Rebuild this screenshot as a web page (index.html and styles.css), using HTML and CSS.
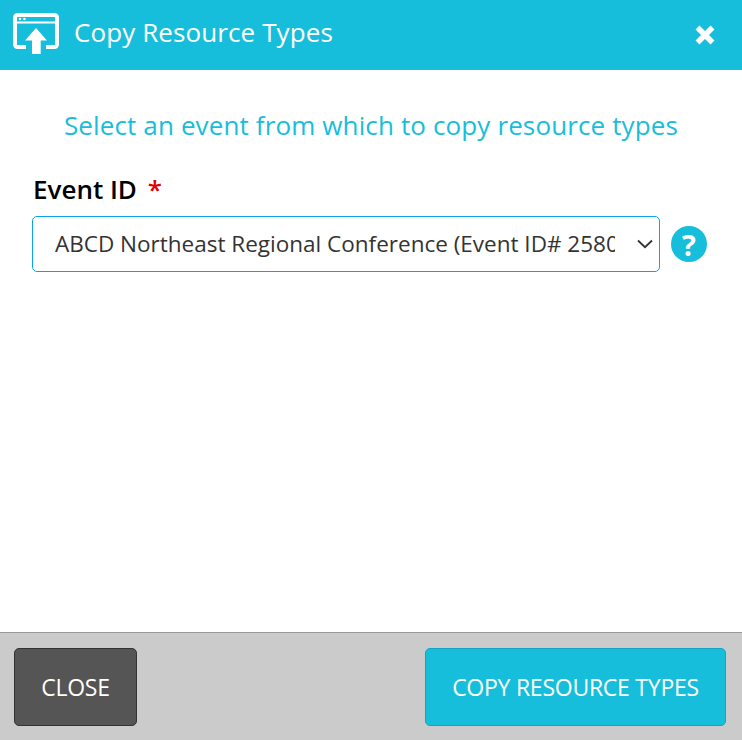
FILE: index.html
```html
<!DOCTYPE html>
<html lang="en">
<head>
  <meta charset="UTF-8">
  <title>Copy Resource Types</title>
  <link rel="stylesheet" href="styles.css">
</head>
<body>
  <div class="dialog">
    <header class="titlebar">
      <svg class="title-icon" width="46" height="41" viewBox="0 0 46 41">
        <path d="M13 34H4.5A2.5 2.5 0 0 1 2 31.5V4.5A2.5 2.5 0 0 1 4.5 2h37A2.5 2.5 0 0 1 44 4.5v27a2.5 2.5 0 0 1-2.5 2.5H33" fill="none" stroke="#fff" stroke-width="4"/>
        <path d="M2 9.5h42" stroke="#fff" stroke-width="2"/>
        <circle cx="7" cy="6" r="1.3" fill="#fff"/>
        <circle cx="11.5" cy="6" r="1.3" fill="#fff"/>
        <path d="M23 15L34 27.5H27.7V41H19V27.5H12Z" fill="#fff"/>
      </svg>
      <span class="title-text">Copy Resource Types</span>
      <svg class="title-close" width="20" height="20" viewBox="0 0 20 20">
        <path d="M2.5 2.5L17.5 17.5M17.5 2.5L2.5 17.5" stroke="#fff" stroke-width="5.6"/>
      </svg>
    </header>

    <main class="content">
      <h2 class="prompt">Select an event from which to copy resource types</h2>
      <label class="field-label">Event ID <span class="req">*</span></label>
      <div class="field-row">
        <div class="select-box">
          <span class="select-value">ABCD Northeast Regional Conference (Event ID# 2580)</span>
          <svg class="chevron" width="16" height="10" viewBox="0 0 16 10">
            <path d="M1 1.5L8 8.2L15 1.5" fill="none" stroke="#333" stroke-width="1.8"/>
          </svg>
        </div>
        <span class="help">?</span>
      </div>
    </main>

    <footer class="actions">
      <button class="btn btn-close">CLOSE</button>
      <button class="btn btn-copy">COPY RESOURCE TYPES</button>
    </footer>
  </div>
</body>
</html>
```

FILE: styles.css
```css
html, body {
  margin: 0;
  padding: 0;
}
body {
  font-family: "Open Sans", sans-serif;
  background: #fff;
}
.dialog {
  width: 742px;
  height: 740px;
  display: flex;
  flex-direction: column;
}
.titlebar {
  height: 70px;
  background: #17bedb;
  display: flex;
  align-items: center;
  padding: 0 27px 0 13px;
  color: #fff;
  box-sizing: border-box;
}
.title-icon {
  align-self: flex-start;
  margin: 13px 15px 0 0;
}
.title-text {
  font-size: 26px;
  letter-spacing: 0.1px;
  flex: 1;
  padding-bottom: 7px;
}
.title-close {
  margin-bottom: 1px;
}
.content {
  flex: 1;
  padding: 0 32px;
}
.prompt {
  margin: 37px 0 0;
  font-size: 26px;
  line-height: 36px;
  font-weight: 400;
  color: #17bedb;
  text-align: center;
  letter-spacing: 0.13px;
}
.field-label {
  display: block;
  margin-top: 30px;
  padding-left: 1px;
  font-size: 26px;
  line-height: 32px;
  font-weight: 600;
  color: #000;
}
.req {
  color: #e00000;
  margin-left: 4px;
}
.field-row {
  display: flex;
  align-items: center;
  margin-top: 11px;
}
.select-box {
  width: 628px;
  height: 56px;
  box-sizing: border-box;
  border: 1px solid #0aa5e6;
  border-radius: 5px;
  display: flex;
  align-items: center;
  padding: 0 6px 0 22px;
  background: #fff;
}
.select-value {
  flex: 1;
  font-size: 22.5px;
  color: #333;
  white-space: nowrap;
  overflow: hidden;
  margin-right: 22px;
  padding-bottom: 2px;
}
.help {
  width: 36px;
  height: 36px;
  margin-left: 11px;
  border-radius: 50%;
  background: #17bedb;
  color: #fff;
  font-size: 29px;
  font-weight: 700;
  display: flex;
  align-items: center;
  justify-content: center;
}
.actions {
  height: 108px;
  box-sizing: border-box;
  background: #cbcbcb;
  border-top: 1px solid #999;
  padding: 15px 16px 14px 14px;
  display: flex;
  justify-content: space-between;
}
.btn {
  font-family: "Open Sans", sans-serif;
  font-size: 23px;
  color: #fff;
  height: 78px;
  border-radius: 5px;
  cursor: pointer;
  letter-spacing: -0.25px;
}
.btn-close {
  width: 123px;
  background: #555;
  border: 1px solid #333;
  padding: 0;
}
.btn-copy {
  width: 301px;
  background: #17bedb;
  border: 1px solid #13a5bf;
}
```
